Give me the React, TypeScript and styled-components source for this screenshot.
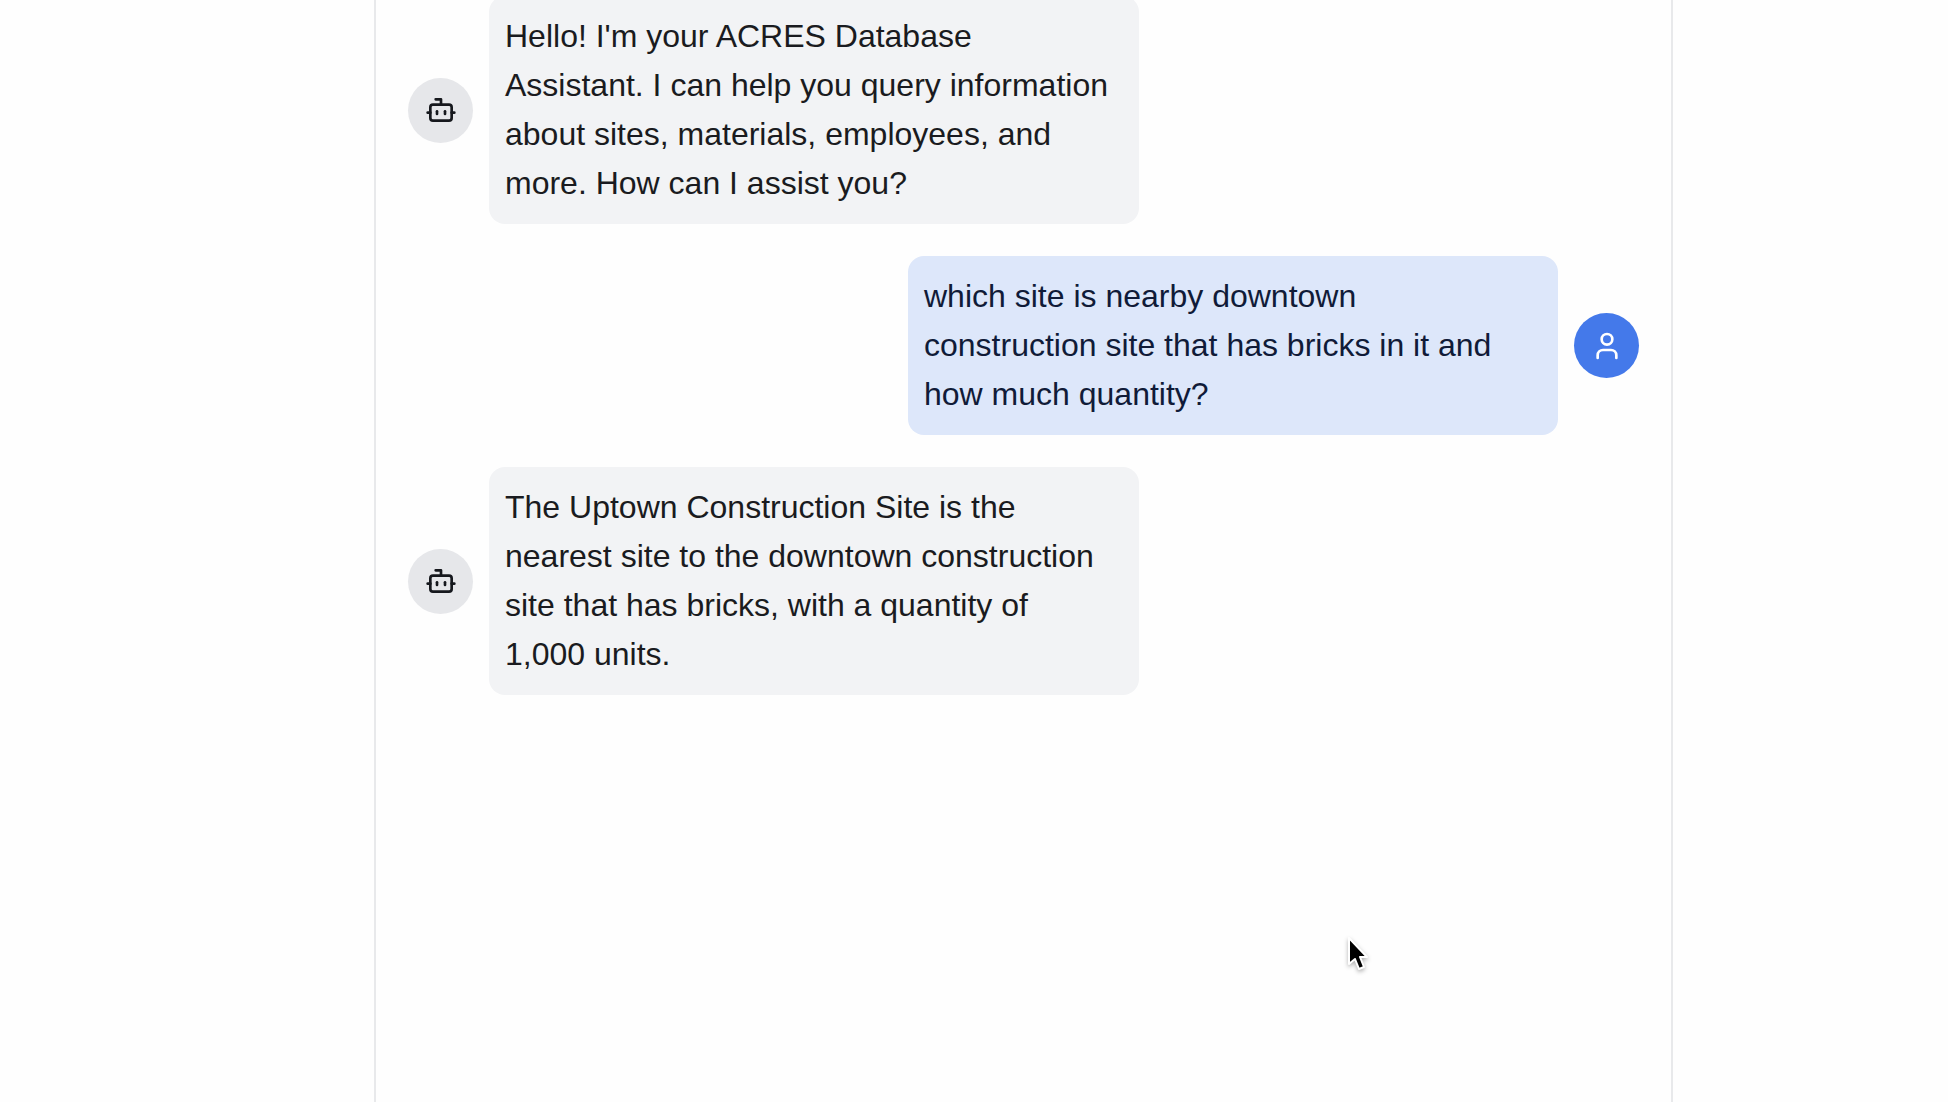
import React from "react";
import styled, { createGlobalStyle } from "styled-components";
import { Bot, User } from "lucide-react";

type Role = "assistant" | "user";

const GlobalStyle = createGlobalStyle`
  *, *::before, *::after { box-sizing: border-box; }
  body {
    margin: 0;
    background: #fefefe;
    font-family: "Liberation Sans", Arial, sans-serif;
  }
`;

const Page = styled.div`
  display: flex;
  height: 100vh;
  overflow: hidden;
  padding: 0 275px 0 374px;
`;

const Panel = styled.main`
  flex: 1;
  min-width: 0;
  padding: 0 32px;
  border: solid #e8e9eb;
  border-width: 0 2px;
`;

/* The conversation is scrolled slightly past its first message. */
const MessageList = styled.ol`
  display: flex;
  flex-direction: column;
  gap: 32px;
  margin: -4px 0 0;
  padding: 0;
  list-style: none;
`;

const MessageRow = styled.li<{ $role: Role }>`
  display: flex;
  flex-direction: ${({ $role }) => ($role === "user" ? "row-reverse" : "row")};
  align-items: center;
  gap: 16px;
`;

const Avatar = styled.span<{ $role: Role }>`
  display: flex;
  flex: none;
  align-items: center;
  justify-content: center;
  width: 65px;
  height: 65px;
  border-radius: 50%;
  color: ${({ $role }) => ($role === "user" ? "#ffffff" : "#16181d")};
  background: ${({ $role }) => ($role === "user" ? "#4479ea" : "#e6e7ea")};
`;

const Bubble = styled.p<{ $role: Role }>`
  width: 650px;
  margin: 0;
  padding: 16px;
  border-radius: 16px;
  font-size: 32px;
  line-height: 49px;
  white-space: pre-line;
  color: ${({ $role }) => ($role === "user" ? "#101b38" : "#1a1b20")};
  background: ${({ $role }) => ($role === "user" ? "#dde7fa" : "#f2f3f5")};
`;

const Pointer = styled.svg`
  position: absolute;
  left: 1345px;
  top: 935px;
  filter: drop-shadow(0 2px 2px rgba(0, 0, 0, 0.3));
  pointer-events: none;
`;

const messages: { role: Role; text: string }[] = [
  {
    role: "assistant",
    text: "Hello! I'm your ACRES Database\nAssistant. I can help you query information\nabout sites, materials, employees, and\nmore. How can I assist you?",
  },
  {
    role: "user",
    text: "which site is nearby downtown\nconstruction site that has bricks in it and\nhow much quantity?",
  },
  {
    role: "assistant",
    text: "The Uptown Construction Site is the\nnearest site to the downtown construction\nsite that has bricks, with a quantity of\n1,000 units.",
  },
];

export default function App() {
  return (
    <Page>
      <GlobalStyle />
      <Panel>
        <MessageList>
          {messages.map(({ role, text }) => (
            <MessageRow key={text} $role={role}>
              <Avatar $role={role}>
                {role === "user" ? <User size={32} /> : <Bot size={32} />}
              </Avatar>
              <Bubble $role={role}>{text}</Bubble>
            </MessageRow>
          ))}
        </MessageList>
      </Panel>
      <Pointer width="26" height="40" viewBox="0 0 26 40" aria-hidden="true">
        <path
          d="M4 3 V29 L10 24 L14 34 L19 32 L15 22 H22 Z"
          fill="#000000"
          stroke="#ffffff"
          strokeWidth="2"
          strokeLinejoin="round"
        />
      </Pointer>
    </Page>
  );
}
